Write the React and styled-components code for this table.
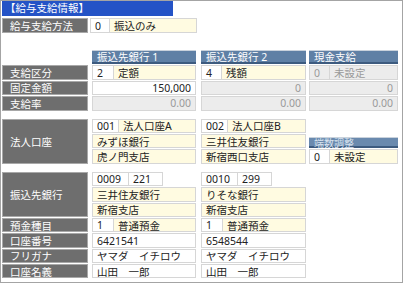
import React from "react"
import styled, { createGlobalStyle } from "styled-components"

const ROW = 14.4

const GlobalStyle = createGlobalStyle`
  html, body {
    margin: 0;
    padding: 0;
    background: #fff;
  }
  body {
    font-family: "Noto Sans", "Noto Sans CJK JP", sans-serif;
    font-size: 10.5px;
    color: #222;
  }
`

const tones = {
  white: "#ffffff",
  yellow: "#fffbe1",
  off: "#ececec",
}

const Frame = styled.div`
  box-sizing: border-box;
  width: 403px;
  height: 283px;
  border: 1px solid #a4a4a4;
  padding: 0 1px;
`

const TitleBar = styled.div`
  box-sizing: border-box;
  width: 171px;
  height: 15px;
  line-height: 15px;
  padding-left: 3px;
  background: #2453c6;
  color: #fff;
`

const MethodRow = styled.div`
  display: flex;
  height: 15px;
  margin-top: 2px;
`

const Section = styled.div`
  display: flex;
  align-items: flex-start;
  margin-top: ${(p) => p.$gap}px;
`

const Column = styled.div`
  display: grid;
  grid-auto-rows: ${ROW}px;
  row-gap: 1px;
  width: ${(p) => p.$w}px;
  margin-left: ${(p) => p.$ml || 0}px;
`

const Label = styled.div`
  box-sizing: border-box;
  display: flex;
  align-items: center;
  width: ${(p) => (p.$w ? `${p.$w}px` : "auto")};
  padding-left: 7px;
  grid-row: span ${(p) => p.$span || 1};
  background: #6e6e6e;
  border: 1px solid #a8a8a8;
  color: #fff;
  white-space: nowrap;
`

const Header = styled.div`
  box-sizing: border-box;
  display: flex;
  align-items: center;
  align-self: end;
  height: ${(p) => (p.$compact ? "11px" : "100%")};
  padding-left: 5px;
  background: ${(p) => (p.$compact ? "#6a8aae" : "#5f80a5")};
  border-top: 1px solid #c9d2dc;
  border-bottom: 2px solid #3d5b7f;
  color: ${(p) => (p.$compact ? "#d9e3ef" : "#fff")};
  font-size: ${(p) => (p.$compact ? "10px" : "inherit")};
  white-space: nowrap;
`

const Row = styled.div`
  display: flex;
  height: 100%;
`

const Cell = styled.div`
  box-sizing: border-box;
  display: flex;
  align-items: center;
  justify-content: ${(p) => (p.$right ? "flex-end" : "flex-start")};
  flex: ${(p) => (p.$w ? "none" : 1)};
  width: ${(p) => (p.$w ? `${p.$w}px` : "auto")};
  margin-left: ${(p) => p.$ml || 0}px;
  padding: 0 4px;
  background: ${(p) => tones[p.$tone || "white"]};
  border: 1px solid #d6d6d6;
  color: ${(p) => (p.$tone === "off" ? "#9a9a9a" : "#222")};
  white-space: nowrap;
  overflow: hidden;

  & + & {
    border-left: none;
  }
`

const Blank = styled.div``

const Pair = ({ code, name, codeW = 22, codeTone = "white", nameTone = "yellow" }) => (
  <Row>
    <Cell $w={codeW} $tone={codeTone}>{code}</Cell>
    <Cell $tone={nameTone}>{name}</Cell>
  </Row>
)

const Single = ({ tone = "white", right, children }) => (
  <Row>
    <Cell $tone={tone} $right={right}>{children}</Cell>
  </Row>
)

const payees = [
  { bank: "0009", branch: "221", bankName: "三井住友銀行", branchName: "新宿支店", no: "6421541" },
  { bank: "0010", branch: "299", bankName: "りそな銀行", branchName: "新宿支店", no: "6548544" },
]

const corp = [
  { code: "001", name: "法人口座A", bank: "みずほ銀行", branch: "虎ノ門支店" },
  { code: "002", name: "法人口座B", bank: "三井住友銀行", branch: "新宿西口支店" },
]

const cols = [
  { w: 104, ml: 4 },
  { w: 105, ml: 5 },
]

const App = () => (
  <>
    <GlobalStyle />
    <Frame>
      <TitleBar>【給与支給情報】</TitleBar>
      <MethodRow>
        <Label $w={86}>給与支給方法</Label>
        <Cell $w={20} $ml={2}>0</Cell>
        <Cell $w={87} $tone="yellow">振込のみ</Cell>
      </MethodRow>

      <Section $gap={17}>
        <Column $w={86}>
          <Blank />
          <Label>支給区分</Label>
          <Label>固定金額</Label>
          <Label>支給率</Label>
        </Column>
        <Column $w={104} $ml={4}>
          <Header>振込先銀行 1</Header>
          <Pair code="2" name="定額" />
          <Single right>150,000</Single>
          <Single tone="off" right>0.00</Single>
        </Column>
        <Column $w={105} $ml={5}>
          <Header>振込先銀行 2</Header>
          <Pair code="4" name="残額" codeW={21} />
          <Single tone="off" right>0</Single>
          <Single tone="off" right>0.00</Single>
        </Column>
        <Column $w={89} $ml={3}>
          <Header>現金支給</Header>
          <Pair code="0" name="未設定" codeW={21} codeTone="off" nameTone="off" />
          <Single tone="off" right>0</Single>
          <Single tone="off" right>0.00</Single>
        </Column>
      </Section>

      <Section $gap={8}>
        <Column $w={86}>
          <Label $span={3}>法人口座</Label>
        </Column>
        {corp.map((c, i) => (
          <Column key={c.code} $w={cols[i].w} $ml={cols[i].ml}>
            <Pair code={c.code} name={c.name} codeW={27} />
            <Single tone="yellow">{c.bank}</Single>
            <Single tone="yellow">{c.branch}</Single>
          </Column>
        ))}
        <Column $w={89} $ml={3}>
          <Blank />
          <Header $compact>端数調整</Header>
          <Pair code="0" name="未設定" codeW={21} />
        </Column>
      </Section>

      <Section $gap={8}>
        <Column $w={86}>
          <Label $span={3}>振込先銀行</Label>
          <Label>預金種目</Label>
          <Label>口座番号</Label>
          <Label>フリガナ</Label>
          <Label>口座名義</Label>
        </Column>
        {payees.map((p, i) => (
          <Column key={p.bank} $w={cols[i].w} $ml={cols[i].ml}>
            <Row>
              <Cell $w={37}>{p.bank}</Cell>
              <Cell $w={34}>{p.branch}</Cell>
            </Row>
            <Single tone="yellow">{p.bankName}</Single>
            <Single tone="yellow">{p.branchName}</Single>
            <Pair code="1" name="普通預金" />
            <Single>{p.no}</Single>
            <Single>ヤマダ　イチロウ</Single>
            <Single>山田　一郎</Single>
          </Column>
        ))}
      </Section>
    </Frame>
  </>
)

export default App
